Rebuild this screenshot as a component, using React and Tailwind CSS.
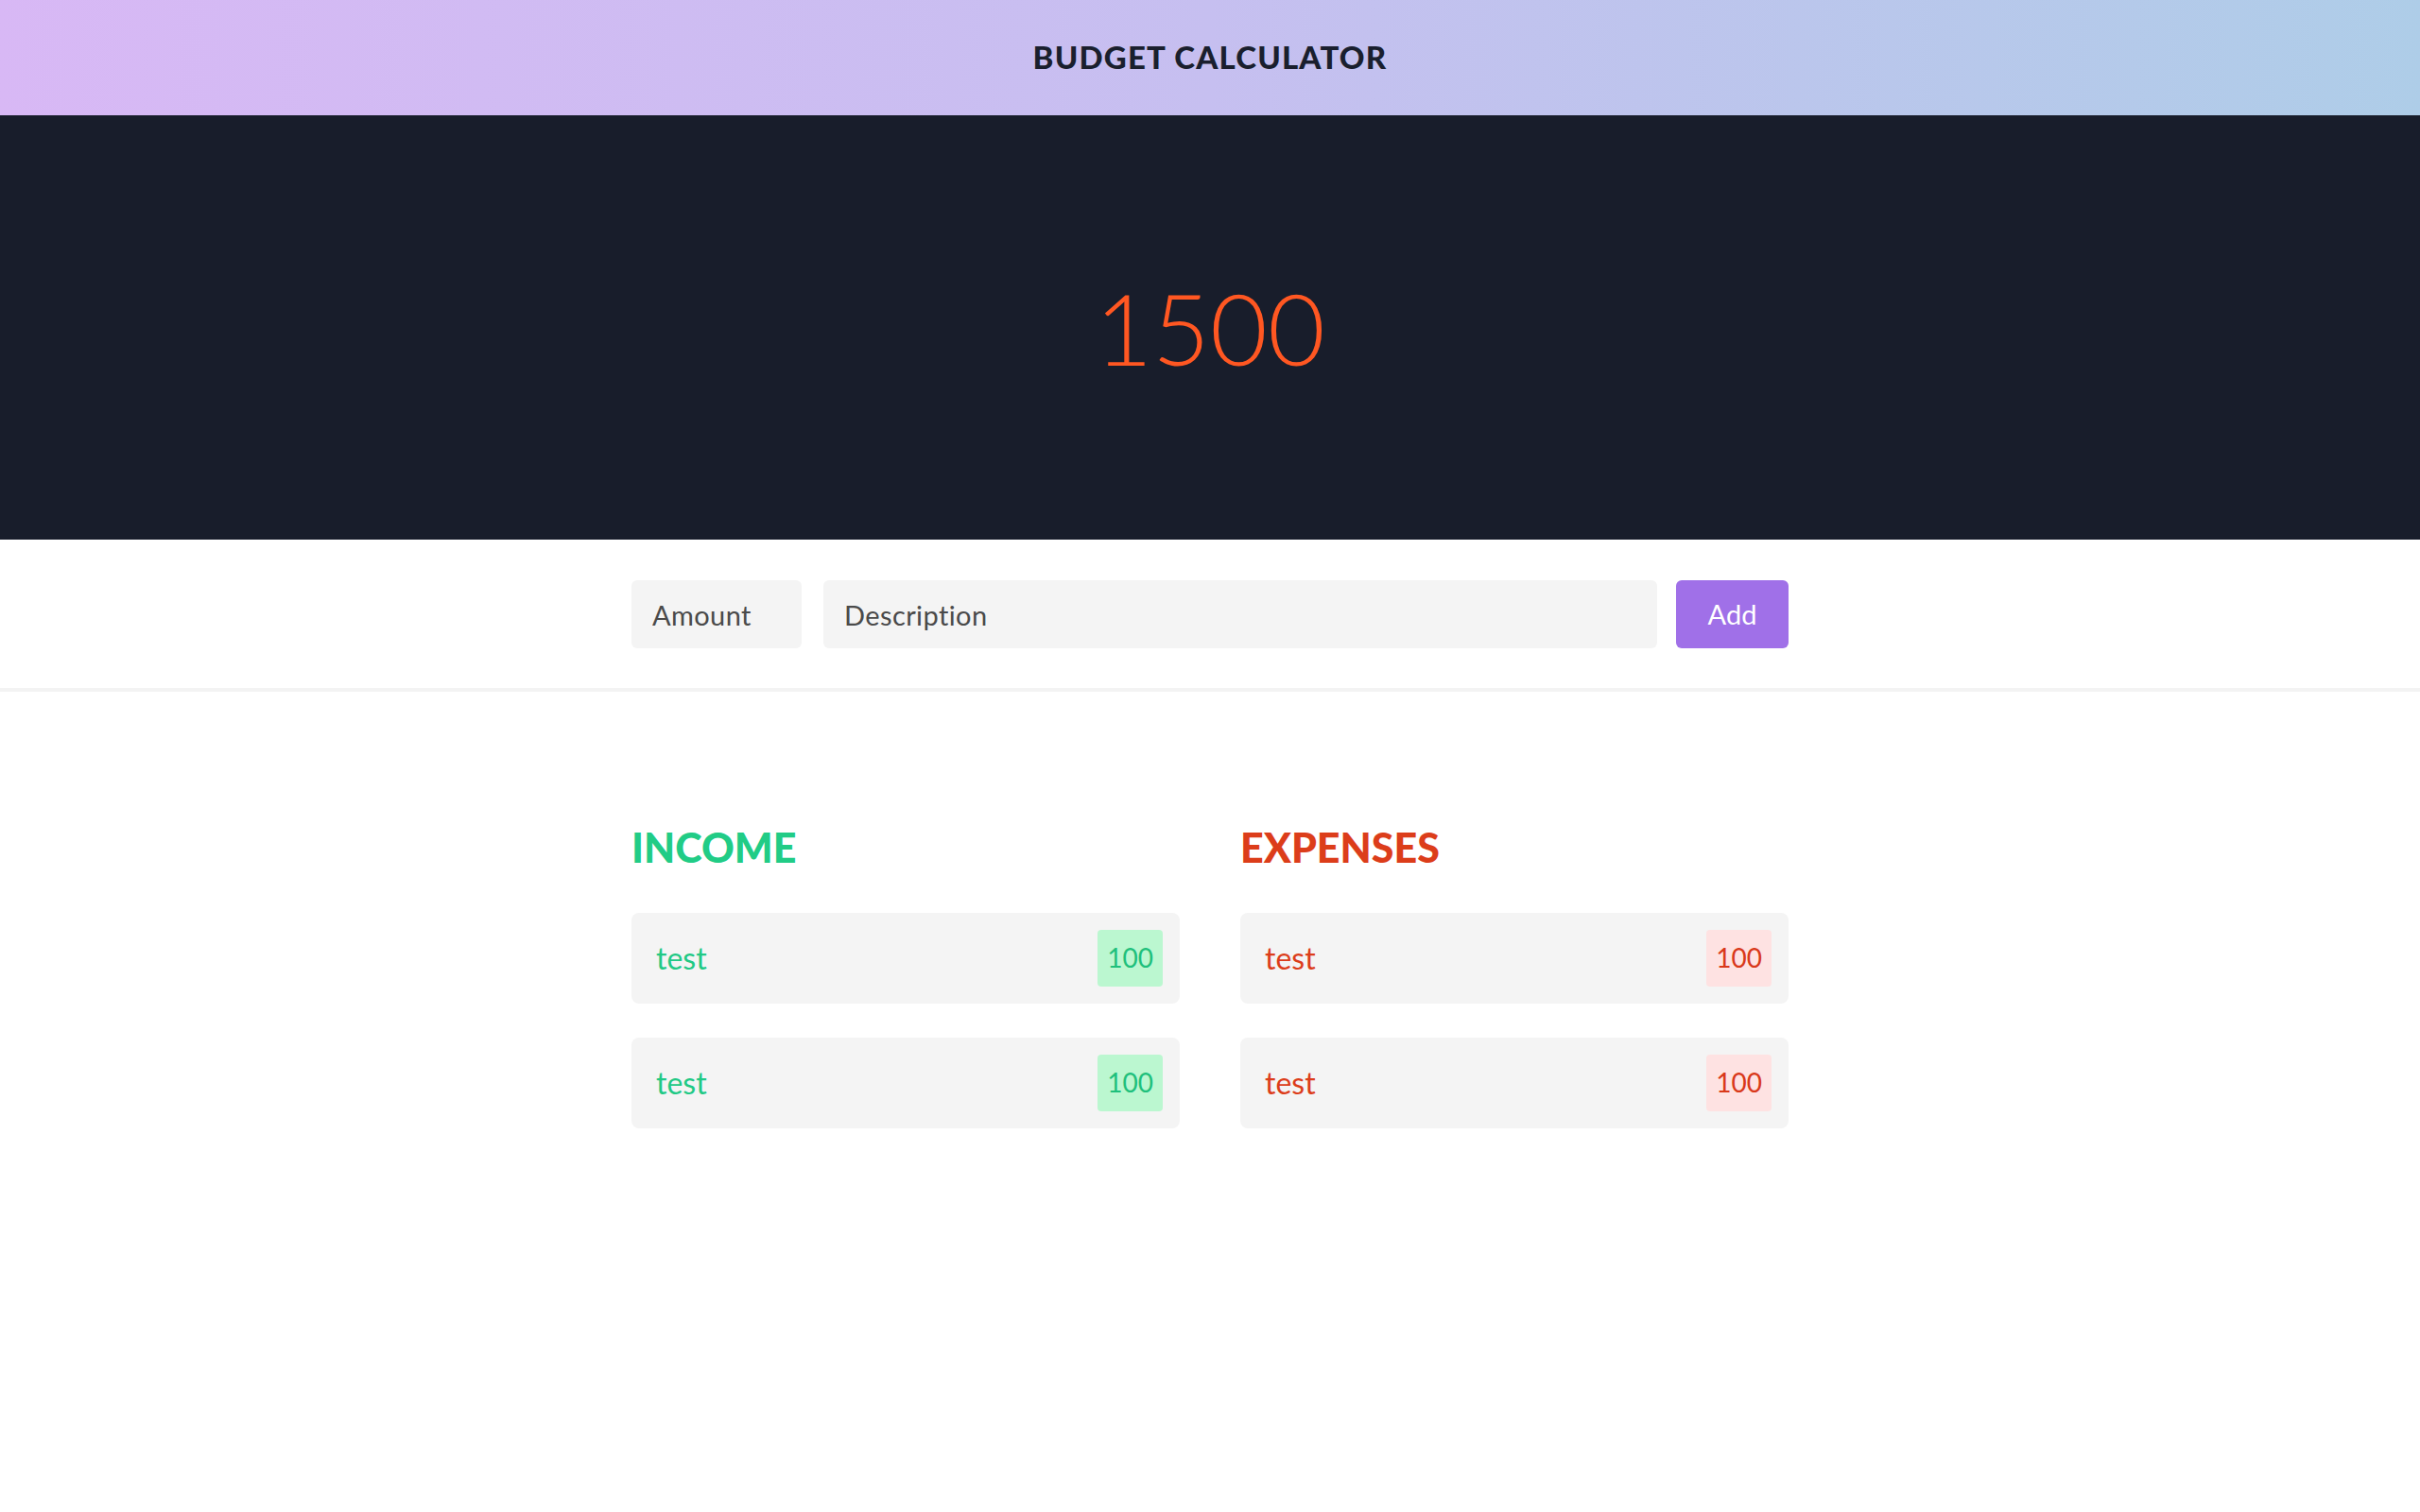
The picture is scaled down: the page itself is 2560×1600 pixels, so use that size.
const income = [
  { id: 1, description: 'test', amount: 100 },
  { id: 2, description: 'test', amount: 100 },
]

const expenses = [
  { id: 1, description: 'test', amount: 100 },
  { id: 2, description: 'test', amount: 100 },
]

function EntryList({ title, items, titleClass, textClass, badgeClass }) {
  return (
    <div className="flex flex-col">
      <h2 className={`text-[43px] font-black leading-none ${titleClass}`}>{title}</h2>
      <div className="mt-[48px] flex flex-col gap-[36px]">
        {items.map((item) => (
          <div
            key={item.id}
            className="flex h-[96px] items-center justify-between rounded-lg bg-[#f4f4f4] pl-[26px] pr-[18px]"
          >
            <span className={`text-[32px] ${textClass}`}>{item.description}</span>
            <span className={`flex h-[60px] items-center rounded px-[10px] pb-[2px] text-[28px] ${badgeClass}`}>
              {item.amount}
            </span>
          </div>
        ))}
      </div>
    </div>
  )
}

export default function App() {
  const total = 1500

  return (
    <div className="min-h-screen bg-white font-['Lato',sans-serif]">
      {/* Header */}
      <header className="flex h-[122px] items-center justify-center bg-gradient-to-r from-[#d8b8f5] via-[#c6bff0] to-[#aecde8]">
        <h1 className="text-[33px] font-black tracking-[1.2px] text-[#1a1f2e]">BUDGET CALCULATOR</h1>
      </header>

      {/* Total */}
      <section className="flex h-[449px] items-center justify-center bg-[#181d2b]">
        <span className="text-[105px] font-light text-[#ff5722]">{total}</span>
      </section>

      {/* Form */}
      <section className="border-b-4 border-[#f3f3f3] pb-[42px] pt-[43px]">
        <form className="mx-auto flex w-[1224px] items-center" onSubmit={(e) => e.preventDefault()}>
          <input
            type="text"
            placeholder="Amount"
            className="h-[72px] w-[180px] rounded-md bg-[#f4f4f4] px-[22px] text-[29px] tracking-[0.4px] text-[#4a4a4a] outline-none placeholder:text-[#4a4a4a]"
          />
          <input
            type="text"
            placeholder="Description"
            className="ml-[23px] h-[72px] flex-1 rounded-md bg-[#f4f4f4] px-[22px] text-[29px] tracking-[0.4px] text-[#4a4a4a] outline-none placeholder:text-[#4a4a4a]"
          />
          <button
            type="submit"
            className="ml-[20px] h-[72px] w-[119px] rounded-md bg-[#a070e8] text-[29px] text-white"
          >
            Add
          </button>
        </form>
      </section>

      {/* Lists */}
      <section className="mx-auto grid w-[1224px] grid-cols-2 gap-[64px] pt-[143px]">
        <EntryList
          title="INCOME"
          items={income}
          titleClass="text-[#21cc86]"
          textClass="text-[#21c985]"
          badgeClass="bg-[#bbf7d0] text-[#1fc07c]"
        />
        <EntryList
          title="EXPENSES"
          items={expenses}
          titleClass="text-[#dc3d1a]"
          textClass="text-[#dc3d1a]"
          badgeClass="bg-[#fee2e2] text-[#d9391a]"
        />
      </section>
    </div>
  )
}
